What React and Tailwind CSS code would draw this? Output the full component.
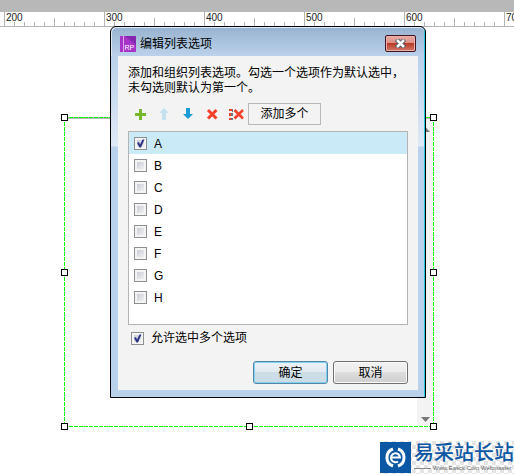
import { useState } from 'react';

const RULER_STEPS = [200, 300, 400, 500, 600, 700];
const TICKS = [0, 1, 2, 3, 4, 5, 6, 7, 8, 9];

const HANDLES = [
  'left-0 top-0',
  'left-full top-0',
  'left-0 top-1/2',
  'left-full top-1/2',
  'left-0 top-full',
  'left-1/2 top-full',
  'left-full top-full',
];

const tickHeight = (n) => (n === 0 ? 'h-[14px]' : n === 5 ? 'h-2' : 'h-1');

function Ruler() {
  return (
    <div className="flex h-[15px] overflow-hidden border-b border-[#b4b4b4] bg-white pl-1">
      {RULER_STEPS.map((step) => (
        <div key={step} className="relative flex w-[100px] shrink-0 items-end">
          {TICKS.map((n) => (
            <span key={n} className={`w-2.5 border-l border-[#b4b4b4] ${tickHeight(n)}`} />
          ))}
          <span className="absolute left-0.5 top-0 text-[10px] leading-[12px] text-[#222]">{step}</span>
        </div>
      ))}
    </div>
  );
}

function SelectedListBox() {
  return (
    <div className="absolute left-16 top-[117px] h-[309px] w-[369px]">
      <div className="flex h-full justify-end border-t-2 border-[#b4b4b4]">
        <div className="flex w-4 flex-col items-center justify-between bg-[#f3f3f3] pb-1 pt-2">
          <svg className="h-[5px] w-[9px]" viewBox="0 0 9 5" fill="#777"><path d="M0 5h9L4.500 0z" /></svg>
          <svg className="h-[5px] w-[9px]" viewBox="0 0 9 5" fill="#777"><path d="M0 0h9L4.500 5z" /></svg>
        </div>
      </div>
      <span className="absolute left-0 top-0 h-px w-full bg-[repeating-linear-gradient(90deg,#00ff00_0_4px,transparent_4px_5px)]" />
      <span className="absolute left-0 top-full h-px w-full bg-[repeating-linear-gradient(90deg,#00ff00_0_4px,transparent_4px_5px)]" />
      <span className="absolute left-0 top-0 h-full w-px bg-[repeating-linear-gradient(#00ff00_0_4px,transparent_4px_5px)]" />
      <span className="absolute left-full top-0 h-full w-px bg-[repeating-linear-gradient(#00ff00_0_4px,transparent_4px_5px)]" />
      {HANDLES.map((pos) => (
        <span key={pos} className={`absolute -ml-[3px] -mt-[3px] size-[7px] border border-black bg-white ${pos}`} />
      ))}
    </div>
  );
}

function CheckBox({ id, checked, onChange }) {
  return (
    <span className="relative flex size-[13px] shrink-0">
      <input
        id={id}
        type="checkbox"
        checked={checked}
        onChange={onChange}
        className="size-[13px] appearance-none border border-[#8e8f8f] bg-linear-to-br from-[#bfc3cd] to-[#fbfbfb] shadow-[inset_0_0_0_2px_#f4f4f4]"
      />
      {checked && (
        <svg className="pointer-events-none absolute inset-0 size-[13px]" viewBox="0 0 13 13" fill="#2b3482">
          <path d="M3 6l2-1 1 2.500L8.500 2.500l2 0L7 10.500H5.500z" />
        </svg>
      )}
    </span>
  );
}

function ToolButton({ label, children, ...props }) {
  return (
    <button type="button" aria-label={label} className="flex size-6 items-center justify-center" {...props}>
      <svg className="size-4" viewBox="0 0 16 16">{children}</svg>
    </button>
  );
}

function Toolbar({ onAdd }) {
  return (
    <div className="flex h-[22px] items-center">
      <ToolButton label="添加" onClick={onAdd}><path fill="#77b82a" d="M7 3h3v4h4v3h-4v4H7v-4H3V7h4z" /></ToolButton>
      <ToolButton label="上移" disabled><path fill="#c3e1ee" d="M8 2l5 5h-3v7H6V7H3z" /></ToolButton>
      <ToolButton label="下移"><path fill="#1b9bd8" d="M6 2h4v6h3l-5 5-5-5h3z" /></ToolButton>
      <ToolButton label="删除"><path stroke="#f5402c" strokeWidth="3" d="M4 4l8.500 8.500M12.500 4L4 12.500" /></ToolButton>
      <ToolButton label="全部删除">
        <path stroke="#f5402c" strokeWidth="2.500" d="M6.500 4l8.500 8.500M15 4l-8.500 8.500" />
        <path fill="#f5402c" d="M1 3h4v2H1zM1 7h3v3H1zM1 12h4v2H1z" />
        <path fill="#777" d="M4 3h1v3H4zM3 7h2v3H3zM3 12h2v2H3z" />
      </ToolButton>
      <button type="button" className="h-[22px] w-[73px] border border-[#b8b8b8] bg-[#f3f3f3]">添加多个</button>
    </div>
  );
}

function OptionsDialog() {
  const [options, setOptions] = useState(['A', 'B', 'C', 'D', 'E', 'F', 'G', 'H']);
  const [picked, setPicked] = useState('A');
  const [multiple, setMultiple] = useState(true);

  return (
    <div
      role="dialog"
      aria-label="编辑列表选项"
      className="absolute left-[110px] top-[26px] w-[316px] rounded-t-md border border-black bg-[#b9d1ea] shadow-[inset_-1px_-1px_0_#1fc8e0,inset_1px_1px_0_#dcebf8]"
    >
      <div className="m-px flex h-[27px] items-center rounded-t-[5px] bg-linear-to-b from-[#99b4d1] to-[#b9d1ea] px-2 pt-1">
        <svg className="size-4 shrink-0" viewBox="0 0 16 16">
          <path fill="#a733c8" d="M0 0h16v16H0z" />
          <path fill="#8428b0" d="M5 0h11v9z" />
          <path fill="#d9a4e8" d="M3 0h1v16H3z" />
          <text x="4.500" y="14" fill="#fff" fontSize="7" fontFamily="Liberation Sans, sans-serif">RP</text>
        </svg>
        <h1 className="ml-1 flex-1 text-xs leading-4">编辑列表选项</h1>
        <button
          type="button"
          aria-label="关闭"
          className="flex h-[17px] w-[31px] items-center justify-center rounded-xs border border-[#431420] bg-[linear-gradient(#e9aca4,#dc8d82_50%,#b93b26_50%,#d07a6c)] shadow-[inset_0_0_0_1px_#e8b0a8]"
        >
          <svg className="h-[9px] w-[11px]" viewBox="0 0 11 9" fill="none">
            <path stroke="#535666" strokeWidth="4.500" d="M1.500 .5l8 8M9.500 .5l-8 8" />
            <path stroke="#fff" strokeWidth="2.500" d="M2 1l7 7M9 1L2 8" />
          </svg>
        </button>
      </div>

      <div className="mr-px flex bg-[linear-gradient(#b9d1ea,#dfe9f6_90px,#b9d1ea_91px)] pb-[7px] pl-[7px] pr-[6px]">
        <div className="min-w-0 flex-1 bg-[#f3f3f3] px-2.5 pb-1.5 pt-2.5">
          <p className="-mr-2 leading-[15px]">
            添加和组织列表选项。勾选一个选项作为默认选中，
            <br />
            未勾选则默认为第一个。
          </p>
          <div className="mt-[7px]">
            <Toolbar onAdd={() => setOptions([...options, '新选项'])} />
          </div>

          <ul className="mt-1.5 h-[194px] overflow-hidden border border-[#b4b4b4] bg-white">
            {options.map((name, i) => (
              <li key={i} className={`flex h-[22px] items-center gap-[7px] pl-[5px] ${picked === name ? 'bg-[#cbeaf7]' : ''}`}>
                <CheckBox id={`option-${i}`} checked={picked === name} onChange={() => setPicked(picked === name ? '' : name)} />
                <label htmlFor={`option-${i}`} className="pt-0.5">{name}</label>
              </li>
            ))}
          </ul>

          <div className="mt-1.5 flex items-center gap-[7px] pl-[3px]">
            <CheckBox id="multiple" checked={multiple} onChange={() => setMultiple(!multiple)} />
            <label htmlFor="multiple" className="leading-[15px]">允许选中多个选项</label>
          </div>

          <div className="mt-[15px] flex justify-end gap-[5px]">
            <button
              type="button"
              className="h-[23px] w-[75px] rounded-[3px] border border-[#5586a3] bg-[linear-gradient(#edf3f7,#dfe9f0_50%,#cbdde7_50%,#cbdce5)] shadow-[inset_0_0_0_1px_#7fd2f6]"
            >
              确定
            </button>
            <button
              type="button"
              className="h-[23px] w-[75px] rounded-[3px] border border-[#707070] bg-[linear-gradient(#f2f2f2,#ebebeb_50%,#dddddd_50%,#cfcfcf)] shadow-[inset_0_0_0_1px_#fafafa]"
            >
              取消
            </button>
          </div>
        </div>
      </div>
    </div>
  );
}

function SiteMark() {
  return (
    <div className="absolute bottom-0 right-0 flex h-[33px] w-[134px] bg-[repeating-conic-gradient(#e4e4e4_0_25%,#ffffff_0_50%)] bg-size-[8px_8px]">
      <svg className="mt-px size-[31px] shrink-0" viewBox="0 0 31 31" fill="none">
        <path fill="#0b57a4" d="M0 0h31v31H0z" />
        <path stroke="#fff" strokeWidth="3" d="M13 7A9 9 0 0 0 13 24M18 7A9 9 0 0 1 18 24" />
        <path stroke="#fff" strokeWidth="2" d="M11 15.500h9a4.500 4.500 0 1 0-2 4" />
      </svg>
      <div className="ml-[3px] whitespace-nowrap">
        <div className="text-[20px] font-medium leading-[24px] text-[#0b57a4]">易采站长站</div>
        <div className="flex items-center gap-0.5 text-[6px] leading-[6px] text-[#666]">
          <span className="h-px w-[17px] bg-[#888]" />
          Www.Easck.Com Webmaster
        </div>
      </div>
    </div>
  );
}

export default function App() {
  return (
    <div className="relative min-h-screen overflow-hidden bg-white font-['Liberation_Sans','Noto_Sans_CJK_SC',sans-serif] text-xs text-black">
      <div className="h-3 bg-[#b8b8b8]" />
      <Ruler />
      <SelectedListBox />
      <OptionsDialog />
      <SiteMark />
    </div>
  );
}
